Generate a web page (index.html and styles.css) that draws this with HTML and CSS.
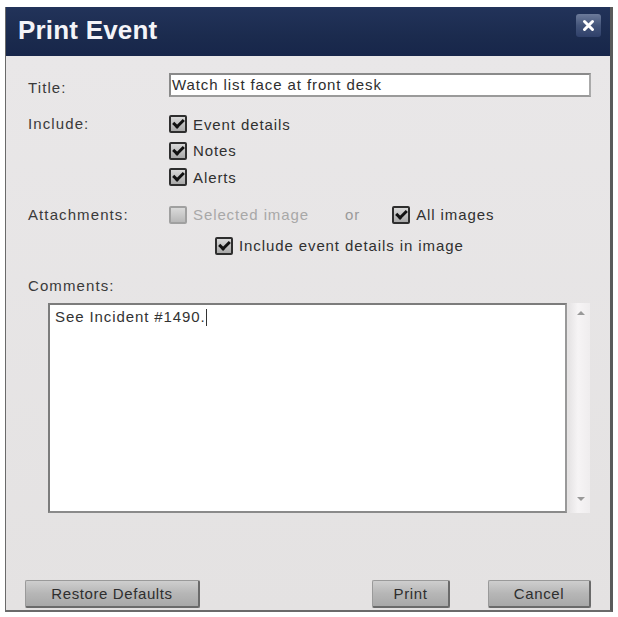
FILE: index.html
```html
<!DOCTYPE html>
<html>
<head>
<meta charset="utf-8">
<link rel="stylesheet" href="styles.css">
</head>
<body>
<div class="dialog">
  <div class="titlebar">
    <span class="title">Print Event</span>
    <span class="close">
      <svg width="25" height="23" viewBox="0 0 25 23"><path d="M8.5 7.5 L16.5 15.5 M16.5 7.5 L8.5 15.5" stroke="#fff" stroke-width="3" stroke-linecap="round"/></svg>
    </span>
  </div>
  <div class="content">
    <div class="row title-row">
      <span class="label">Title:</span>
      <div class="input">Watch list face at front desk</div>
    </div>
    <div class="row include-row">
      <span class="label">Include:</span>
      <div class="checks">
        <div class="check"><span class="box on"></span>Event details</div>
        <div class="check"><span class="box on"></span>Notes</div>
        <div class="check"><span class="box on"></span>Alerts</div>
      </div>
    </div>
    <div class="row attach-row">
      <span class="label">Attachments:</span>
      <div class="attach">
        <div class="check disabled"><span class="box"></span>Selected image</div>
        <span class="or">or</span>
        <div class="check"><span class="box on"></span>All images</div>
      </div>
    </div>
    <div class="row details-row">
      <div class="check"><span class="box on"></span>Include event details in image</div>
    </div>
    <div class="row comments-label">
      <span class="label">Comments:</span>
    </div>
    <div class="comments">
      <div class="textarea">See Incident #1490.<span class="caret"></span></div>
      <div class="scrollbar">
        <span class="arrow up"></span>
        <span class="arrow down"></span>
      </div>
    </div>
    <div class="buttons">
      <button class="btn restore">Restore Defaults</button>
      <div class="spacer"></div>
      <button class="btn print">Print</button>
      <button class="btn cancel">Cancel</button>
    </div>
  </div>
</div>
</body>
</html>
```

FILE: styles.css
```css
html, body {
  margin: 0;
  padding: 0;
  background: #ffffff;
}
body {
  font-family: "Liberation Sans", Arial, sans-serif;
  font-size: 15px;
  letter-spacing: 0.9px;
  color: #333;
}
.dialog {
  margin: 7px 0 0 5px;
  width: 604px;
  height: 603px;
  border-left: 1px solid #6a6a6a;
  border-right: 3px solid #5a5a5a;
  border-bottom: 2px solid #6a6a6a;
  display: flex;
  flex-direction: column;
  background: #e6e4e4;
}
.titlebar {
  height: 49px;
  background: linear-gradient(#22335a, #1b2b4e 60%, #17264a);
  display: flex;
  align-items: center;
  justify-content: space-between;
  padding: 0 9px 0 12px;
  box-sizing: border-box;
}
.title {
  color: #f4f4f8;
  font-weight: bold;
  font-size: 26px;
  letter-spacing: 0.2px;
  margin-top: -2px;
}
.close {
  width: 25px;
  height: 23px;
  margin-top: -12px;
  background: linear-gradient(#6c7b9a, #44557a 50%, #2f406a);
  border-radius: 3px;
  display: flex;
}
.content {
  flex: 1;
  display: flex;
  flex-direction: column;
  padding: 17px 19px 0 22px;
  background: linear-gradient(#e9e7e8, #e4e2e2);
}
.row {
  display: flex;
  align-items: flex-start;
}
.label {
  width: 141px;
  flex: none;
  color: #3a3a3a;
  letter-spacing: 1.1px;
}
.title-row {
  align-items: center;
  height: 24px;
}
.title-row .label {
  margin-top: 4px;
}
.input {
  width: 418px;
  height: 20px;
  border: 2px solid #8a8a8a;
  border-right-color: #aaa;
  border-bottom-color: #9a9a9a;
  background: #fff;
  line-height: 20px;
  padding-left: 1px;
  color: #2e2e2e;
  white-space: nowrap;
}
.include-row {
  margin-top: 14px;
}
.include-row .label {
  line-height: 26px;
}
.checks {
  display: flex;
  flex-direction: column;
}
.check {
  display: flex;
  align-items: center;
  height: 26.5px;
  color: #303030;
  white-space: nowrap;
}
.box {
  width: 14px;
  height: 14px;
  border: 2px solid #2e2e2e;
  border-radius: 2px;
  background: linear-gradient(#d8d8d8, #a8a8a8);
  margin-right: 6px;
  position: relative;
  flex: none;
}
.box.on::after {
  content: "";
  position: absolute;
  left: 2px;
  top: 2px;
  width: 8px;
  height: 4px;
  border-left: 3px solid #111;
  border-bottom: 3px solid #111;
  transform: rotate(-45deg);
  transform-origin: center;
}
.check.disabled {
  color: #a8a8a8;
}
.check.disabled .box {
  border-color: #a0a0a0;
  background: linear-gradient(#dadada, #b8b8b8);
}
.attach-row {
  margin-top: 11px;
  align-items: center;
  height: 26px;
}
.attach {
  display: flex;
  align-items: center;
}
.or {
  color: #9a9a9a;
  margin-left: 36px;
  margin-right: 32px;
}
.details-row {
  margin-top: 5px;
  padding-left: 187px;
}
.comments-label {
  margin-top: 13px;
  height: 26px;
  align-items: center;
}
.comments {
  margin-top: 5px;
  display: flex;
  padding-left: 20px;
}
.textarea {
  background: #fff;
  border: 2px solid #7c7c7c;
  border-right-color: #999;
  border-bottom-color: #8a8a8a;
  padding: 3px 0 0 5px;
  color: #333;
  height: 203px;
  width: 510px;
}
.caret {
  display: inline-block;
  width: 1px;
  height: 17px;
  background: #333;
  vertical-align: -4px;
  margin-left: 0;
}
.scrollbar {
  margin-left: 3px;
  width: 20px;
  height: 210px;
  background: linear-gradient(90deg, #e8e6e7, #f6f4f5 40%, #efedee);
  position: relative;
}
.arrow {
  position: absolute;
  left: 7px;
  width: 0;
  height: 0;
  border-left: 4px solid transparent;
  border-right: 4px solid transparent;
}
.arrow.up {
  top: 8px;
  border-bottom: 4px solid #999;
}
.arrow.down {
  bottom: 12px;
  border-top: 4px solid #999;
}
.buttons {
  margin-top: 67px;
  display: flex;
  margin-left: -3px;
}
.spacer {
  flex: 1;
}
.btn {
  height: 28px;
  font-family: "Liberation Sans", Arial, sans-serif;
  font-size: 15px;
  letter-spacing: 0.6px;
  color: #2e2e2e;
  background: linear-gradient(#cecece, #b6b6b6 50%, #a8a8a8);
  border: 1px solid #9a9a9a;
  border-right: 2px solid #6a6a6a;
  border-bottom: 2px solid #6a6a6a;
  border-radius: 2px;
  padding: 0;
}
.restore {
  width: 175px;
}
.print {
  width: 78px;
}
.cancel {
  width: 103px;
  margin-left: 38px;
}
```
